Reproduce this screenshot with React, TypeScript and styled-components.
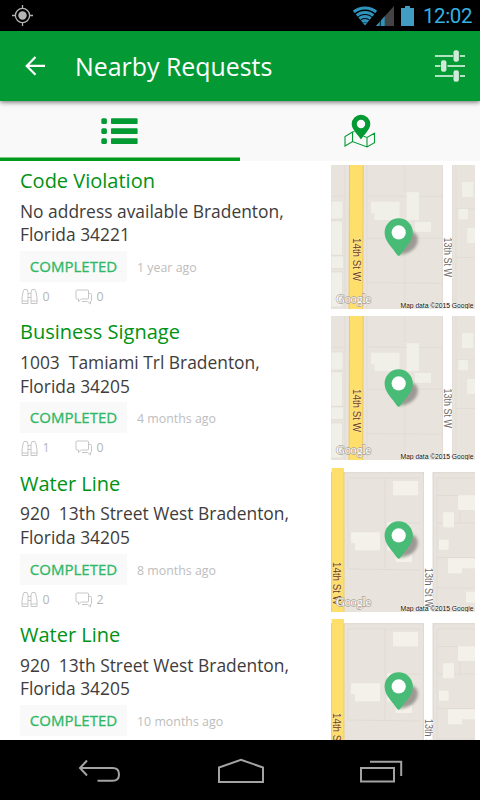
import styled, { createGlobalStyle } from 'styled-components';

type MapKind = 'wide' | 'corner';

interface Request {
  id: number;
  title: string;
  address: string[];
  age: string;
  followers?: number;
  comments?: number;
  map: MapKind;
}

const requests: Request[] = [
  {
    id: 1,
    title: 'Code Violation',
    address: ['No address available Bradenton,', 'Florida 34221'],
    age: '1 year ago',
    followers: 0,
    comments: 0,
    map: 'wide',
  },
  {
    id: 2,
    title: 'Business Signage',
    address: ['1003  Tamiami Trl Bradenton,', 'Florida 34205'],
    age: '4 months ago',
    followers: 1,
    comments: 0,
    map: 'wide',
  },
  {
    id: 3,
    title: 'Water Line',
    address: ['920  13th Street West Bradenton,', 'Florida 34205'],
    age: '8 months ago',
    followers: 0,
    comments: 2,
    map: 'corner',
  },
  {
    id: 4,
    title: 'Water Line',
    address: ['920  13th Street West Bradenton,', 'Florida 34205'],
    age: '10 months ago',
    map: 'corner',
  },
];

export default function App() {
  return (
    <>
      <GlobalStyle />
      <Screen>
        <StatusBar>
          <GpsIcon />
          <StatusIcons>
            <WifiIcon />
            <SignalIcon />
            <BatteryIcon />
            <Clock>12:02</Clock>
          </StatusIcons>
        </StatusBar>
        <AppBar>
          <BackIcon />
          <AppTitle>Nearby Requests</AppTitle>
          <FilterIcon />
        </AppBar>
        <Tabs>
          <Tab isActive>
            <ListIcon />
          </Tab>
          <Tab isActive={false}>
            <MapTabIcon />
          </Tab>
        </Tabs>
        <RequestList>
          {requests.map((request) => (
            <RequestRow key={request.id}>
              <Details>
                <RequestTitle>{request.title}</RequestTitle>
                <Address>{request.address.join('\n')}</Address>
                <StatusLine>
                  <StatusTag>COMPLETED</StatusTag>
                  <Age>{request.age}</Age>
                </StatusLine>
                {request.followers !== undefined && (
                  <Counters>
                    <Counter>
                      <BinocularsIcon />
                      {request.followers}
                    </Counter>
                    <Counter>
                      <CommentsIcon />
                      {request.comments}
                    </Counter>
                  </Counters>
                )}
              </Details>
              <MapThumb kind={request.map} />
            </RequestRow>
          ))}
        </RequestList>
        <NavBar>
          <NavBackIcon />
          <NavHomeIcon />
          <NavRecentIcon />
        </NavBar>
      </Screen>
    </>
  );
}

function MapThumb({ kind }: { kind: MapKind }) {
  return (
    <MapSvg width="144" height="144" viewBox="0 0 144 144">
      {kind === 'wide' ? <WideMap /> : <CornerMap />}
      <defs>
        <filter id="soft" x="-50%" y="-50%" width="200%" height="200%">
          <feGaussianBlur stdDeviation="1.5" />
        </filter>
      </defs>
      <path
        d="M68 90 C74 82 66 72 75 67 C84 64 89 72 86 79 C83 86 76 89 68 90z"
        fill="#7d7974"
        opacity=".7"
        filter="url(#soft)"
      />
      <path
        d="M67.7 90.8 C66 90.8 64.8 87.8 62 84.3 C57.5 78.6 53.6 73.8 53.6 67.4 a14.1 14.1 0 0 1 28.2 0 C81.8 73.8 77.9 78.6 73.4 84.3 C70.6 87.8 69.4 90.8 67.7 90.8z"
        fill="#48bb76"
      />
      <circle cx="67.7" cy="67.4" r="7.1" fill="#fff" />
      <text
        x="5"
        y="137.5"
        fontFamily="Liberation Serif, serif"
        fontSize="12.5"
        textLength="35"
        fill="#fff"
        stroke="#aaa59b"
        strokeWidth="1.3"
        paintOrder="stroke"
      >
        Google
      </text>
      <text
        x="69.5"
        y="142.6"
        fontFamily="Liberation Sans, sans-serif"
        fontSize="6.9"
        textLength="73"
        fill="#111"
        stroke="#f3f0ea"
        strokeWidth="1"
        paintOrder="stroke"
      >
        Map data ©2015 Google
      </text>
    </MapSvg>
  );
}

interface StreetProps {
  x: number;
  y: number;
  length: number;
  isMain?: boolean;
  children: string;
}

function StreetName({ x, y, length, isMain, children }: StreetProps) {
  return (
    <text
      transform={`translate(${x} ${y}) rotate(90)`}
      fontFamily="Liberation Sans, sans-serif"
      fontSize="10.3"
      textLength={length}
      lengthAdjust="spacingAndGlyphs"
      fill={isMain ? '#6d3a10' : '#6f6b66'}
      stroke={isMain ? '#fde7a0' : '#fff'}
      strokeWidth="1.2"
      paintOrder="stroke"
    >
      {children}
    </text>
  );
}

function WideMap() {
  return (
    <>
      <path d="M0 0h144v144H0z" fill="#e8e4dd" />
      <path
        d="M0 31.5l14 -.5M36 31l75 .5M74 0v27M36 73.500l75-.5M74 73v71M36 117.500l75 .8M125 44h19M125 92.500h19M36 0v144M125 0v144M14 0v144"
        fill="none"
        stroke="#e1ddd5"
      />
      <path
        d="M0 36h12v18H0zM0 55.700h11.500v34.500H0zM0 91h12.700v12.500H0zM0 107h11.500v35H0z"
        fill="#f1f0e8"
        stroke="#dedad1"
        strokeWidth=".6"
      />
      <path
        d="M40 36.700h28.500V55H43.500v-6.700H40zM75.700 27.300H88V55H75.700zM84 57h16v9.700H84zM131 17h11.300v15H131zM127.700 44h9.300v10.300h-9.300zM136.300 63h8v15h-8z"
        fill="#f1f0e8"
      />
      <path d="M18.500 0h14l-.7 144h-14z" fill="#fedf6b" />
      <path d="M18.500 0l-.4 144M32.200 0l-.5 144" stroke="#ecc969" />
      <path d="M112 0h9v144h-9z" fill="#fff" />
      <path d="M111.500 0v144M121.500 0v144" stroke="#dedad2" strokeWidth=".7" />
      <StreetName x={21.5} y={73} length={43} isMain>
        14th St W
      </StreetName>
      <StreetName x={113} y={72.5} length={39.5}>
        13th St W
      </StreetName>
    </>
  );
}

function CornerMap() {
  return (
    <>
      <path d="M0 0h144v144H0z" fill="#fff" />
      <path d="M0 4.500h92.500V144H0zM102 4.500h42V144h-42z" fill="#e8e4dd" />
      <path
        d="M0 4.700h92.500M102 4.700h42M92.400 4v140M102 4v140"
        stroke="#d5d1c8"
        strokeWidth=".8"
      />
      <path
        d="M17 10h72M54 10v90M17 10v91l72 1M54 55h36M106 10h38M106 10v134M106 27.500h21M106 55h38M106 89.500h38M106 120h38M129 42v13"
        fill="none"
        stroke="#e0dcd4"
      />
      <path
        d="M62 13h25v14.300H62zM20 64.300h29v18H24V75h-4zM56.300 54H69v28.500H56.300zM64.700 86H81v8H64.700zM127 27.300h17V42h-17zM112 44.300h11v15h-11zM108 71.700h9.700v10H108zM117 90.300h27v10h-13v5h-14zM135 123.700h9v10.700h-9z"
        fill="#f3f1e9"
      />
      <path d="M.7 0H13v144H.7z" fill="#fedf6b" />
      <path d="M.7 4v140M13 4v140" stroke="#e9c76a" strokeWidth=".8" />
      <StreetName x={2} y={94} length={43} isMain>
        14th St W
      </StreetName>
      <StreetName x={93.5} y={100} length={39.5}>
        13th St W
      </StreetName>
    </>
  );
}

function GpsIcon() {
  return (
    <svg width="21" height="21" viewBox="0 0 21 21">
      <circle cx="10.5" cy="10.5" r="4.2" fill="#b4b4b4" />
      <circle cx="10.5" cy="10.5" r="7.1" fill="none" stroke="#b4b4b4" strokeWidth="1.3" />
      <path d="M10.5 0v3.5M10.5 17.5V21M0 10.500h3.5M17.5 10.500H21" stroke="#b4b4b4" strokeWidth="1.3" />
    </svg>
  );
}

const arcs = [5, 9, 13, 17.5];

function WifiIcon() {
  return (
    <svg width="26" height="20" viewBox="0 0 26 20">
      <clipPath id="fan">
        <path d="M13 19.5L-1 2.5V-2h28v4.500z" />
      </clipPath>
      <g clipPath="url(#fan)" fill="none" stroke="#2e93bd" strokeWidth="3.2">
        {arcs.map((r) => (
          <circle key={r} cx="13" cy="19.5" r={r} />
        ))}
      </g>
      <path d="M13 19.5l-2.500-3h5z" fill="#2e93bd" />
    </svg>
  );
}

function SignalIcon() {
  return (
    <svg width="18" height="20" viewBox="0 0 18 20">
      <path d="M18 0v20H0z" fill="#444" />
      <path d="M8.700 10.300V20H0z" fill="#2e93bd" />
      <path d="M4.300 14v6" stroke="#000" strokeWidth=".8" />
    </svg>
  );
}

function BatteryIcon() {
  return (
    <svg width="13" height="20" viewBox="0 0 13 20">
      <path d="M4 0h5v2h4v18H0V2h4z" fill="#429dc4" />
    </svg>
  );
}

function BackIcon() {
  return (
    <svg width="21" height="20" viewBox="0 0 21 20">
      <path d="M10.500 1L1.700 9.900l8.800 8.900M2 9.900h18" fill="none" stroke="#fff" strokeWidth="2.2" />
    </svg>
  );
}

function FilterIcon() {
  return (
    <svg width="30" height="32" viewBox="0 0 30 32">
      <path
        d="M0 6h18M25 6h5M0 16h5.5M12.500 16H30M0 26h18M25 26h5"
        stroke="#eefaf1"
        strokeWidth="1.6"
      />
      <g fill="#cfead8">
        <rect x="18.5" y=".3" width="5.4" height="11.4" rx="2" />
        <rect x="6" y="10.3" width="5.4" height="11.4" rx="2" />
        <rect x="18.5" y="20.3" width="5.4" height="11.4" rx="2" />
      </g>
    </svg>
  );
}

function ListIcon() {
  return (
    <svg width="37" height="27" viewBox="0 0 37 27">
      <g fill="#039a33">
        {[0.3, 10.3, 20.3].map((y) => (
          <g key={y}>
            <rect x=".3" y={y} width="5.6" height="5.7" rx="1.5" />
            <rect x="10" y={y} width="26.6" height="5.7" rx=".8" />
          </g>
        ))}
      </g>
    </svg>
  );
}

function MapTabIcon() {
  return (
    <svg width="32" height="34" viewBox="0 0 32 34">
      <path
        d="M10.500 17.500L8.500 18 1 22.500v9.500l7.500-4.500 14.500 5.500 7.500-4.300v-9.500L23 23.500l-3.500-1.200M8.500 18v9.500M23 23.500V33"
        fill="none"
        stroke="#039a33"
        strokeWidth="1.1"
      />
      <path
        d="M17 25.500C13.500 20 7.700 15.500 7.700 10a9.300 9.300 0 0 1 18.600 0C26.300 15.500 20.500 20 17 25.500zM17 5.800a4.200 4.200 0 1 0 0 8.400 4.200 4.200 0 0 0 0-8.400z"
        fill="#039a33"
      />
    </svg>
  );
}

function BinocularsIcon() {
  return (
    <svg width="18" height="17" viewBox="0 0 18 17" fill="none" stroke="#c6c6c6" strokeWidth="1">
      <path d="M2 4L3 1.500h3L7 4v11.500H1V10zM1 13h6M15 4l-1-2.500h-3L10 4v11.500h6V10zM16 13h-6M7 5.500h3M7 9.500h3" />
    </svg>
  );
}

function CommentsIcon() {
  return (
    <svg width="18" height="16" viewBox="0 0 18 16" fill="none" stroke="#c6c6c6" strokeWidth="1">
      <path d="M2 1h11Q13.500 1 13.500 2V9q0 1-1 1H6.500L3.500 12.500V10H2Q1 10 1 9V2Q1 1 2 1z" />
      <path d="M13.500 4.500h2q1 0 1 1v6q0 1-1 1V15l-3-2.500H7" />
    </svg>
  );
}

function NavBackIcon() {
  return (
    <svg width="44" height="24" viewBox="0 0 44 24" fill="none" stroke="#a3a3a3" strokeWidth="2">
      <path d="M9 1.500L2 9l7 7.500M2 9h32.500q6.500 0 6.500 6.400T34.500 21.700H19.500" />
    </svg>
  );
}

function NavHomeIcon() {
  return (
    <svg width="46" height="26" viewBox="0 0 46 26" fill="none" stroke="#a3a3a3" strokeWidth="2">
      <path d="M1 24V9.500L23 1.800l22 7.700V24z" />
    </svg>
  );
}

function NavRecentIcon() {
  return (
    <svg width="44" height="23" viewBox="0 0 44 23" fill="none" stroke="#a3a3a3" strokeWidth="2">
      <path d="M2 8h33v13.500H2zM11 1.700h31.200V16" />
    </svg>
  );
}

const GlobalStyle = createGlobalStyle`
  body {
    margin: 0;
    background: #fff;
  }
  svg {
    display: block;
    flex: none;
  }
`;

const Screen = styled.div`
  width: 480px;
  height: 800px;
  display: flex;
  flex-direction: column;
  overflow: hidden;
  font-family: 'Open Sans', sans-serif;
  background: #fff;
`;

const StatusBar = styled.div`
  flex: none;
  height: 31px;
  box-sizing: border-box;
  padding: 0 7px 0 12px;
  display: flex;
  align-items: center;
  justify-content: space-between;
  background: #000;
`;

const StatusIcons = styled.div`
  display: flex;
  align-items: center;

  svg:nth-child(2) {
    margin: 0 7px 0 -2px;
  }
`;

const Clock = styled.span`
  margin: 1px 0 0 9px;
  width: 50px;
  font-family: Roboto, sans-serif;
  font-size: 20.5px;
  line-height: 31px;
  letter-spacing: -0.4px;
  white-space: nowrap;
  color: #35b0e0;
`;

const AppBar = styled.div`
  flex: none;
  height: 70px;
  box-sizing: border-box;
  padding: 0 15px 0 25px;
  display: flex;
  align-items: center;
  color: #fff;
  background: #039a35;
  box-shadow: 0 1px 5px rgba(0, 0, 0, 0.6);
  z-index: 1;
`;

const AppTitle = styled.h1`
  flex: 1;
  margin: 0 0 0 29px;
  font-size: 24.9px;
  font-weight: 400;
  line-height: 34px;
`;

const Tabs = styled.div`
  flex: none;
  height: 60px;
  display: flex;
  background: #f9f9f9;
`;

const Tab = styled.div<{ isActive: boolean }>`
  width: 240px;
  box-sizing: border-box;
  padding: 1px 1px 0 0;
  display: flex;
  align-items: center;
  justify-content: center;
  box-shadow: inset 0 -3.5px ${({ isActive }) => (isActive ? '#009a1c' : 'transparent')};

  & + & {
    padding: 0;
  }
`;

const RequestList = styled.div`
  flex: 1;
  overflow: hidden;
  padding-top: 4px;
`;

const RequestRow = styled.div`
  height: 151.33px;
  padding: 0 5px 0 20px;
  display: flex;
  justify-content: space-between;
`;

const Details = styled.div`
  display: flex;
  flex-direction: column;
`;

const RequestTitle = styled.h2`
  margin: 0;
  font-size: 20px;
  font-weight: 400;
  line-height: 32px;
  color: #009214;
`;

const Address = styled.p`
  margin: 2.6px 0 0;
  font-size: 17.4px;
  line-height: 23.8px;
  white-space: pre;
  color: #403c3c;
`;

const StatusLine = styled.div`
  margin-top: 3.7px;
  display: flex;
  align-items: center;
`;

const StatusTag = styled.span`
  width: 107px;
  height: 31px;
  font-size: 15px;
  line-height: 31px;
  text-align: center;
  color: #2fb865;
  background: #f9f9f9;
  -webkit-text-stroke: 0.3px #2fb865;
`;

const Age = styled.span`
  margin: 2px 0 0 10px;
  font-size: 12.4px;
  color: #bdbdbd;
`;

const Counters = styled.div`
  margin-top: 6px;
  padding-left: 1px;
  display: flex;
`;

const Counter = styled.div`
  width: 54px;
  display: flex;
  align-items: center;
  gap: 3.5px;
  font-size: 12.4px;
  line-height: 18px;
  color: #b5b5b5;
`;

const MapSvg = styled.svg`
  overflow: hidden;
`;

const NavBar = styled.div`
  flex: none;
  height: 60px;
  box-sizing: border-box;
  padding: 2px 77px 0 78px;
  display: flex;
  align-items: center;
  justify-content: space-between;
  background: #000;
`;
